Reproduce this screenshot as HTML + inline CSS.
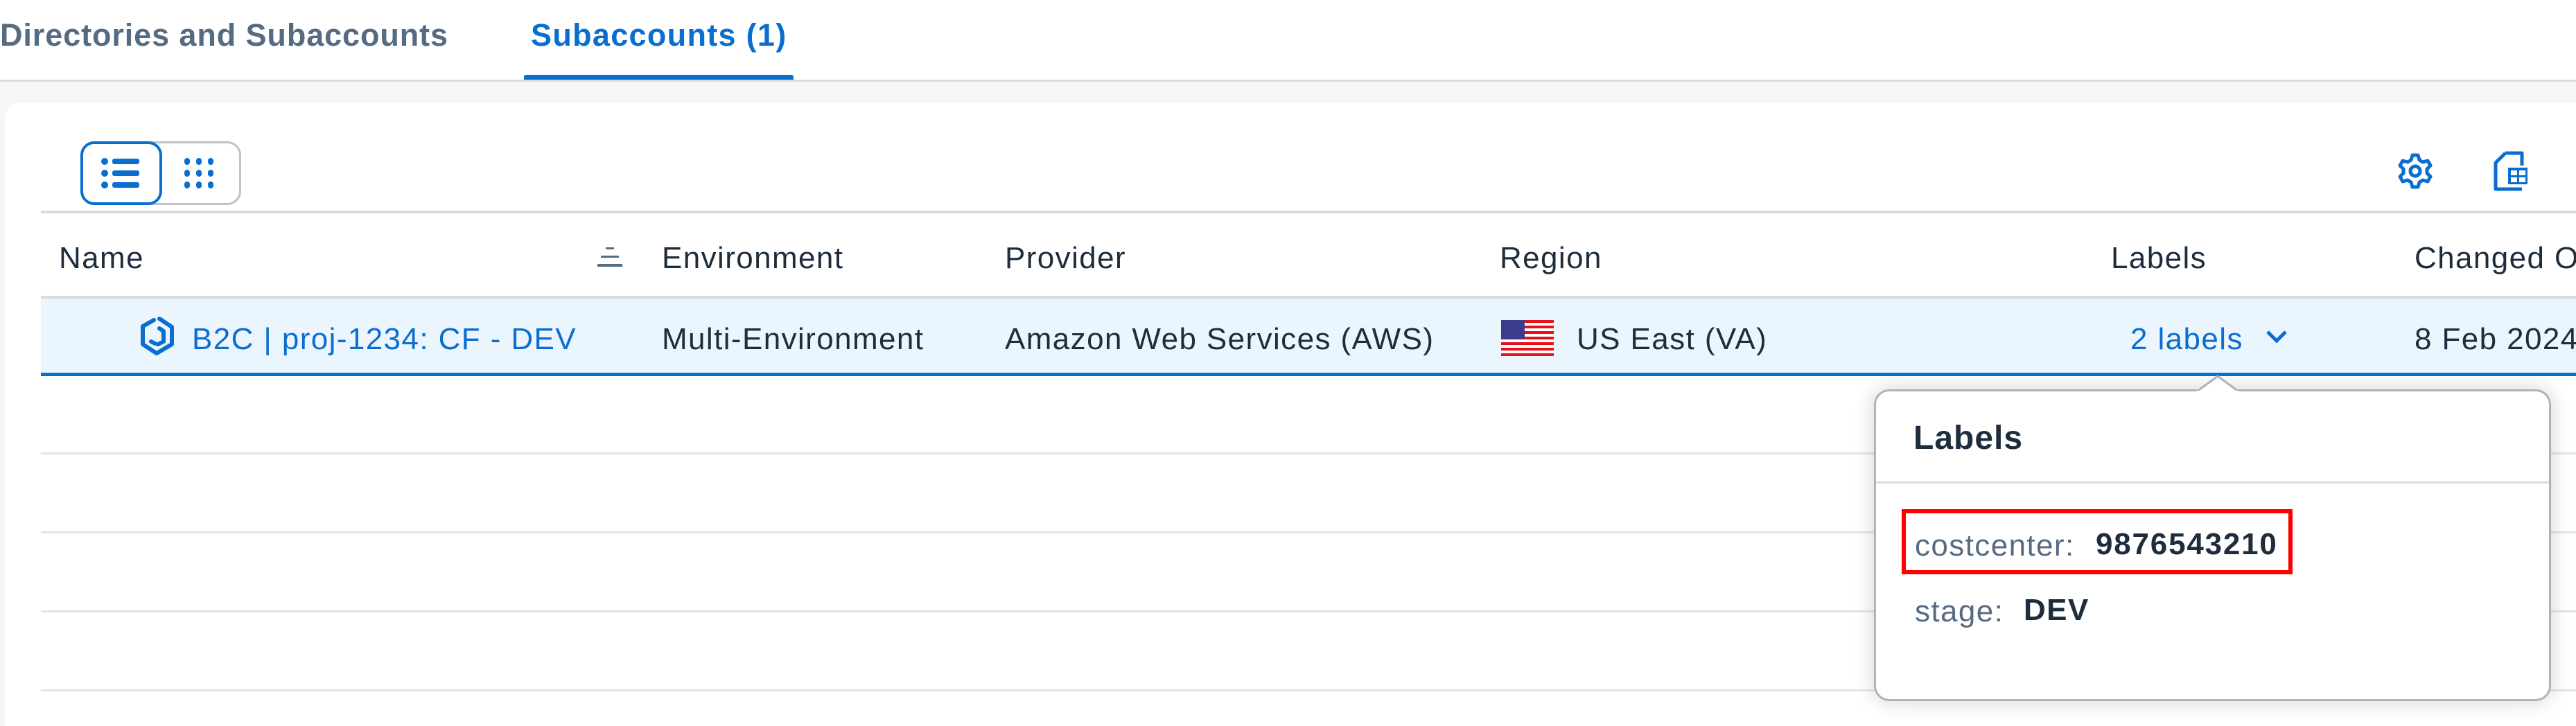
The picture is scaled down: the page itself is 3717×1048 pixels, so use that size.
<!DOCTYPE html>
<html><head><meta charset="utf-8"><style>
*{margin:0;padding:0;box-sizing:border-box}
body{width:3717px;height:1037px;overflow:hidden;background:#f5f6f7;font-family:"Liberation Sans",Arial,sans-serif;position:relative;color:#1d2d3e}
.a{position:absolute;white-space:nowrap}
.t{font-size:44px;letter-spacing:1.4px;line-height:1}
.line{position:absolute;height:3px;background:#e5e5e5;left:59px;right:0}
</style></head><body>
<div class="a" style="left:0;top:0;width:3717px;height:118px;background:#fff;border-bottom:3px solid #d9dcdf"></div>
<div class="a t" style="left:0;top:28px;font-weight:bold;color:#556b82;font-size:45px;letter-spacing:0.9px">Directories and Subaccounts</div>
<div class="a t" style="left:766px;top:28px;font-weight:bold;color:#0a6ed1;font-size:45px;letter-spacing:1.3px">Subaccounts (1)</div>
<div class="a" style="left:756px;top:108px;width:389px;height:7px;background:#0a6ed1;border-radius:3px 3px 0 0"></div>

<div class="a" style="left:7px;top:148px;width:3730px;height:900px;background:#fff;border-radius:24px 0 0 0"></div>

<div class="a" style="left:116px;top:204px;width:232px;height:92px;border:3px solid #bcc3ca;border-radius:20px;background:#fff"></div>
<div class="a" style="left:116px;top:204px;width:118px;height:92px;border:4px solid #0a6ed1;border-radius:20px;background:#fff"></div>
<svg class="a" style="left:145px;top:227px" width="60" height="46" viewBox="0 0 60 46"><g fill="#0a6ed1"><circle cx="6" cy="6" r="5"/><circle cx="6" cy="23" r="5"/><circle cx="6" cy="40" r="5"/><rect x="17" y="2" width="39" height="8" rx="3"/><rect x="17" y="19" width="39" height="8" rx="3"/><rect x="17" y="36" width="39" height="8" rx="3"/></g></svg>
<svg class="a" style="left:263px;top:225px" width="50" height="50" viewBox="0 0 50 50"><g fill="#0a6ed1"><rect x="3" y="3" width="8" height="10" rx="4"/><rect x="20" y="3" width="8" height="10" rx="4"/><rect x="37" y="3" width="8" height="10" rx="4"/><rect x="3" y="20" width="8" height="10" rx="4"/><rect x="20" y="20" width="8" height="10" rx="4"/><rect x="37" y="20" width="8" height="10" rx="4"/><rect x="3" y="37" width="8" height="10" rx="4"/><rect x="20" y="37" width="8" height="10" rx="4"/><rect x="37" y="37" width="8" height="10" rx="4"/></g></svg>

<svg class="a" style="left:3458px;top:220px" width="54" height="54" viewBox="0 0 54 54"><g fill="none" stroke="#0a6ed1" stroke-width="5" stroke-linejoin="round"><path d="M23 4h8l2 7 5 3 7-2 4 7-5 5v6l5 5-4 7-7-2-5 3-2 7h-8l-2-7-5-3-7 2-4-7 5-5v-6l-5-5 4-7 7 2 5-3z"/><circle cx="27" cy="27" r="7"/></g></svg>
<svg class="a" style="left:3597px;top:218px" width="52" height="58" viewBox="0 0 52 58"><g fill="none" stroke="#0a6ed1" stroke-width="5" stroke-linejoin="round"><path d="M18 3h24v18"/><path d="M18 3L4 17v38h38"/></g><rect x="22" y="24" width="28" height="24" fill="#0a6ed1"/><g fill="#fff"><rect x="26" y="28" width="9" height="7"/><rect x="38" y="28" width="9" height="7"/><rect x="26" y="38" width="9" height="7"/><rect x="38" y="38" width="9" height="7"/></g></svg>

<div class="a" style="left:59px;top:304px;right:0;height:4px;background:#d5dadd"></div>

<div class="a t" style="left:85px;top:351px">Name</div>
<svg class="a" style="left:860px;top:354px" width="40" height="34" viewBox="0 0 40 34"><g fill="#556b82"><rect x="14" y="3" width="12" height="3"/><rect x="7" y="15" width="26" height="3"/><rect x="2" y="27" width="36" height="4"/></g></svg>
<div class="a t" style="left:955px;top:351px">Environment</div>
<div class="a t" style="left:1450px;top:351px">Provider</div>
<div class="a t" style="left:2164px;top:351px">Region</div>
<div class="a t" style="left:3046px;top:351px">Labels</div>
<div class="a t" style="left:3484px;top:351px">Changed On</div>
<div class="a" style="left:59px;top:427px;right:0;height:4px;background:#d5dadd"></div>

<div class="a" style="left:59px;top:431px;right:0;height:112px;background:#ebf5fe;border-bottom:5px solid #0a6ed1"></div>
<svg class="a" style="left:200px;top:452px" width="54" height="64" viewBox="0 0 54 64"><g fill="none" stroke="#0a6ed1" stroke-width="6" stroke-linecap="round" stroke-linejoin="round"><path d="M22 10L6 19v26l20 13 22-13V20L30 8"/><path d="M30 22l6 4v15l-8 4"/><path d="M18 41l6 3"/></g></svg>
<div class="a t" style="left:277px;top:468px;color:#0a6ed1">B2C | proj-1234: CF - DEV</div>
<div class="a t" style="left:955px;top:468px">Multi-Environment</div>
<div class="a t" style="left:1450px;top:468px">Amazon Web Services (AWS)</div>
<svg class="a" style="left:2166px;top:462px" width="76" height="52" viewBox="0 0 76 52"><rect width="76" height="52" fill="#fff"/><g fill="#e8101a"><rect y="0" width="76" height="4"/><rect y="8" width="76" height="4"/><rect y="16" width="76" height="4"/><rect y="24" width="76" height="4"/><rect y="32" width="76" height="4"/><rect y="40" width="76" height="4"/><rect y="48" width="76" height="4"/></g><rect width="34" height="28" fill="#3c3b8e"/></svg>
<div class="a t" style="left:2275px;top:468px">US East (VA)</div>
<div class="a t" style="left:3074px;top:468px;color:#0a6ed1">2 labels</div>
<svg class="a" style="left:3268px;top:474px" width="34" height="24" viewBox="0 0 34 24"><path d="M4 5l13 13L30 5" fill="none" stroke="#0a6ed1" stroke-width="5"/></svg>
<div class="a t" style="left:3484px;top:468px">8 Feb 2024</div>

<div class="line" style="top:653px"></div>
<div class="line" style="top:767px"></div>
<div class="line" style="top:881px"></div>
<div class="line" style="top:995px"></div>

<div class="a" style="left:2704px;top:562px;width:977px;height:450px;background:#fff;border:3px solid #a9b4be;border-radius:22px;box-shadow:0 0 30px rgba(0,0,0,.18)"></div>
<svg class="a" style="left:3170px;top:541px" width="60" height="26" viewBox="0 0 60 26"><path d="M0 24L30 2 60 24" fill="#fff" stroke="#a9b4be" stroke-width="3"/><rect x="0" y="23" width="60" height="4" fill="#fff"/></svg>
<div class="a" style="left:2761px;top:605px;font-size:48px;font-weight:bold;color:#1d2d3e;letter-spacing:1px">Labels</div>
<div class="a" style="left:2707px;top:695px;width:971px;height:3px;background:#d9dcdf"></div>
<div class="a" style="left:2744px;top:735px;width:564px;height:94px;border:6px solid #f00"></div>
<div class="a t" style="left:2763px;top:766px;color:#556b82">costcenter:</div>
<div class="a t" style="left:3024px;top:764px;font-weight:bold;letter-spacing:1.8px">9876543210</div>
<div class="a t" style="left:2763px;top:861px;color:#556b82">stage:</div>
<div class="a t" style="left:2920px;top:859px;font-weight:bold">DEV</div>
</body></html>
